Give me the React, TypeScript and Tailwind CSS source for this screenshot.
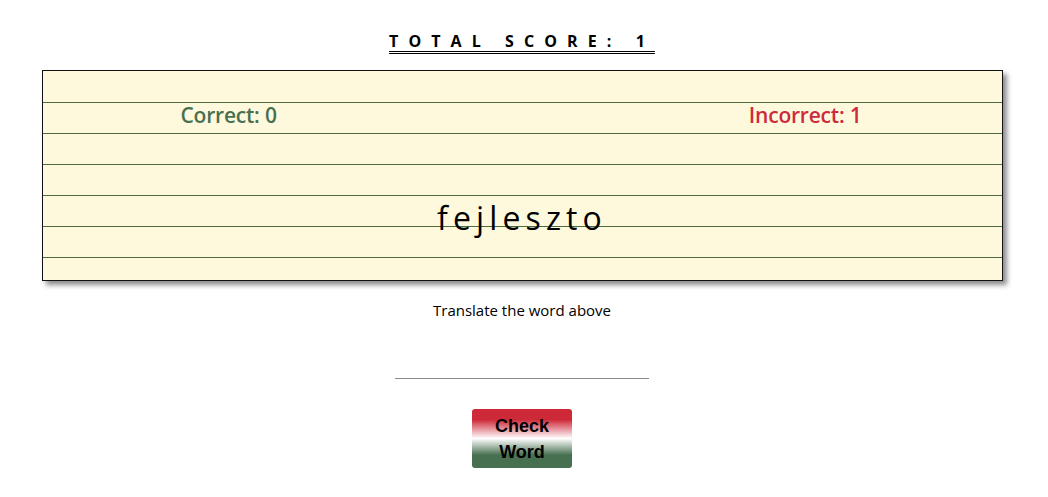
import React, { useState } from 'react';

export default function App() {
  const [answer, setAnswer] = useState('');
  const correct = 0;
  const incorrect = 1;

  return (
    <div className="min-h-screen bg-white font-['Open_Sans',sans-serif] text-black">
      <div className="flex flex-col items-center pt-[30px] pr-[4px]">
        <h1 className="text-[16px] font-bold tracking-[0.63em] underline decoration-double decoration-1 underline-offset-[4px] leading-[22px]">
          TOTAL SCORE: 1
        </h1>

        <div className="mt-[18px] w-[961px] h-[211px] border border-[#111] bg-[#fef9dc] shadow-[4px_4px_5px_rgba(0,0,0,0.45)] bg-[repeating-linear-gradient(to_bottom,transparent_0,transparent_30px,#4d6b3e_30px,#4d6b3e_31px)] bg-[position:0_1px] flex flex-col">
          <div className="mt-[30px] h-[30px] flex items-center justify-between pl-[138px] pr-[140px] text-[21px] font-semibold tracking-[-0.01em]">
            <span className="text-[#477050]">Correct: {correct}</span>
            <span className="text-[#cd2a3e]">Incorrect: {incorrect}</span>
          </div>
          <div className="mt-[67px] flex justify-center">
            <span className="text-[32px] leading-[40px] tracking-[0.16em]">fejleszto</span>
          </div>
        </div>

        <p className="mt-[19px] text-[15px] leading-[20px]">Translate the word above</p>

        <input
          value={answer}
          onChange={(e) => setAnswer(e.target.value)}
          className="mt-[37px] w-[254px] h-[22px] border-b border-[#8a8a8a] outline-none text-center text-[15px] bg-transparent"
        />

        <button className="mt-[30px] w-[100px] h-[59px] rounded-[3px] bg-[linear-gradient(to_bottom,#ce2939_18%,#ffffff_50%,#477050_78%)] font-['Liberation_Sans',Arial,sans-serif] font-bold text-[18px] leading-[26px] text-black">
          Check
          <br />
          Word
        </button>
      </div>
    </div>
  );
}
